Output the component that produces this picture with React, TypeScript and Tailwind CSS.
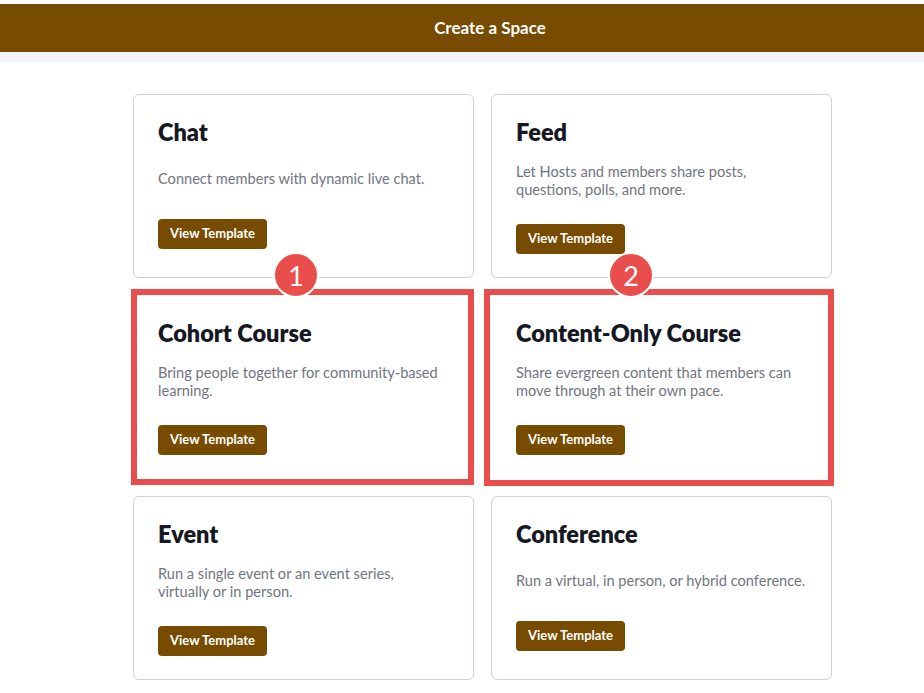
import React from 'react';

interface Template {
  title: string;
  lines: string[];
  mark?: number;
}

const templates: Template[] = [
  { title: 'Chat', lines: ['Connect members with dynamic live chat.'] },
  { title: 'Feed', lines: ['Let Hosts and members share posts,', 'questions, polls, and more.'] },
  { title: 'Cohort Course', lines: ['Bring people together for community-based', 'learning.'], mark: 1 },
  { title: 'Content-Only Course', lines: ['Share evergreen content that members can', 'move through at their own pace.'], mark: 2 },
  { title: 'Event', lines: ['Run a single event or an event series,', 'virtually or in person.'] },
  { title: 'Conference', lines: ['Run a virtual, in person, or hybrid conference.'] },
];

const TemplateCard: React.FC<{ template: Template }> = ({ template }) => {
  const { title, lines, mark } = template;

  return (
    <div
      className={`relative flex h-[184px] flex-col items-start rounded-[6px] border bg-white pl-6 pr-5 pt-[21px] ${
        mark ? 'border-transparent' : 'border-[#cdd1dc]'
      }`}
    >
      <h2 className="text-[23.5px] leading-[32px] font-extrabold text-[#151823]">{title}</h2>
      <div className="mt-[15px] flex min-h-[31px] flex-col justify-center text-[14.6px] leading-[18px] text-[#71757f]">
        {lines.map((line) => (
          <span key={line} className="whitespace-nowrap">
            {line}
          </span>
        ))}
      </div>
      <button className="mt-[25px] h-[30px] rounded-[4px] bg-[#774b00] px-3 text-[13px] font-bold text-white">
        View Template
      </button>

      {/* Annotation overlays */}
      {mark === 1 && (
        <div className="pointer-events-none absolute left-[-3px] top-[-7px] h-[196px] w-[343px] border-[6px] border-[#ea4e4c]" />
      )}
      {mark === 2 && (
        <div className="pointer-events-none absolute left-[-8px] top-[-7px] h-[197px] w-[350px] border-[6px] border-[#ea4e4c]" />
      )}
      {mark && (
        <div
          className={`absolute top-[-44px] flex h-[46px] w-[46px] items-center justify-center rounded-full border-2 border-white bg-[#ea4e4c] text-[27px] leading-none text-white ${
            mark === 1 ? 'left-[139px]' : 'left-[116px]'
          }`}
        >
          {mark}
        </div>
      )}
    </div>
  );
};

export default function App() {
  return (
    <div className="min-h-screen bg-white pt-1 font-['Lato',sans-serif]">
      <header className="flex h-12 items-center justify-center bg-[#774b00] pl-[56px]">
        <h1 className="text-[17px] font-bold text-white">Create a Space</h1>
      </header>
      <div className="h-[10px] bg-[#f3f4f8]" />

      <main className="pt-8 pl-[133px]">
        <div className="grid grid-cols-[341px_341px] gap-[17px]">
          {templates.map((t) => (
            <TemplateCard key={t.title} template={t} />
          ))}
        </div>
      </main>
    </div>
  );
}
